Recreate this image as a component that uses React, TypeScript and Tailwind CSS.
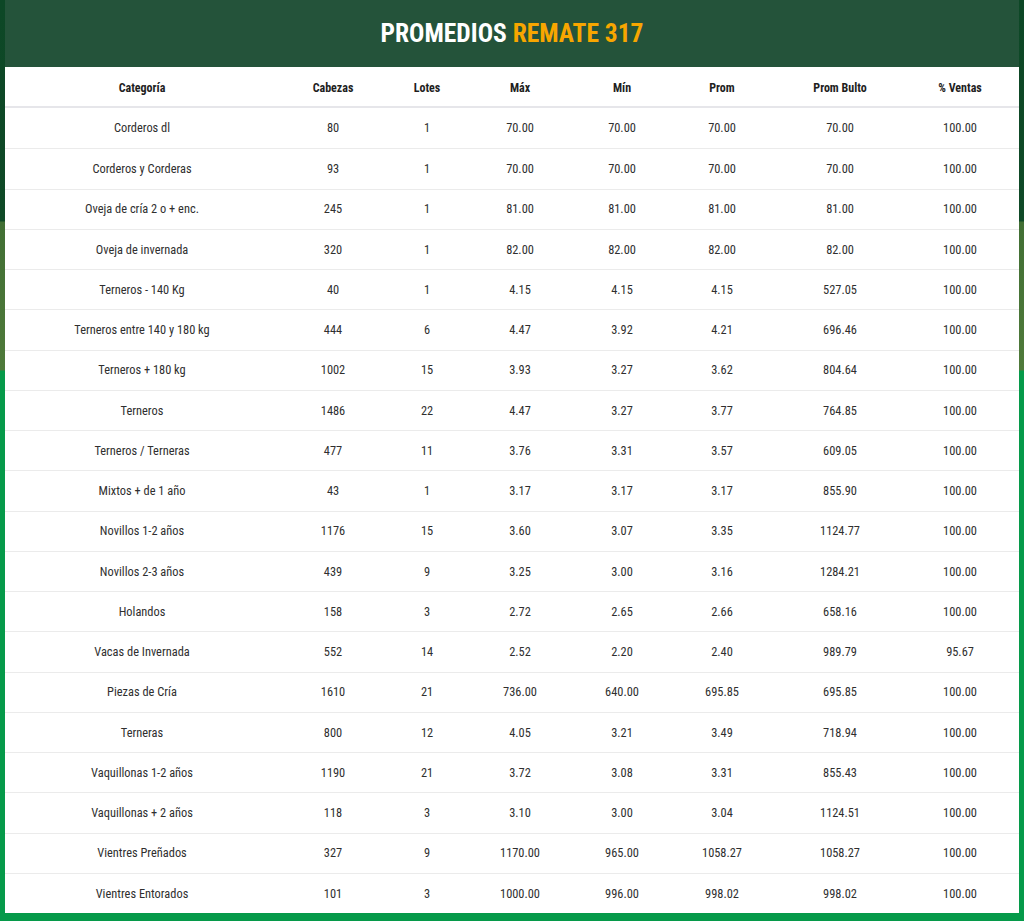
import React from "react";

const rows: string[][] = [
  ["Corderos dl", "80", "1", "70.00", "70.00", "70.00", "70.00", "100.00"],
  ["Corderos y Corderas", "93", "1", "70.00", "70.00", "70.00", "70.00", "100.00"],
  ["Oveja de cría 2 o + enc.", "245", "1", "81.00", "81.00", "81.00", "81.00", "100.00"],
  ["Oveja de invernada", "320", "1", "82.00", "82.00", "82.00", "82.00", "100.00"],
  ["Terneros - 140 Kg", "40", "1", "4.15", "4.15", "4.15", "527.05", "100.00"],
  ["Terneros entre 140 y 180 kg", "444", "6", "4.47", "3.92", "4.21", "696.46", "100.00"],
  ["Terneros + 180 kg", "1002", "15", "3.93", "3.27", "3.62", "804.64", "100.00"],
  ["Terneros", "1486", "22", "4.47", "3.27", "3.77", "764.85", "100.00"],
  ["Terneros / Terneras", "477", "11", "3.76", "3.31", "3.57", "609.05", "100.00"],
  ["Mixtos + de 1 año", "43", "1", "3.17", "3.17", "3.17", "855.90", "100.00"],
  ["Novillos 1-2 años", "1176", "15", "3.60", "3.07", "3.35", "1124.77", "100.00"],
  ["Novillos 2-3 años", "439", "9", "3.25", "3.00", "3.16", "1284.21", "100.00"],
  ["Holandos", "158", "3", "2.72", "2.65", "2.66", "658.16", "100.00"],
  ["Vacas de Invernada", "552", "14", "2.52", "2.20", "2.40", "989.79", "95.67"],
  ["Piezas de Cría", "1610", "21", "736.00", "640.00", "695.85", "695.85", "100.00"],
  ["Terneras", "800", "12", "4.05", "3.21", "3.49", "718.94", "100.00"],
  ["Vaquillonas 1-2 años", "1190", "21", "3.72", "3.08", "3.31", "855.43", "100.00"],
  ["Vaquillonas + 2 años", "118", "3", "3.10", "3.00", "3.04", "1124.51", "100.00"],
  ["Vientres Preñados", "327", "9", "1170.00", "965.00", "1058.27", "1058.27", "100.00"],
  ["Vientres Entorados", "101", "3", "1000.00", "996.00", "998.02", "998.02", "100.00"],
];

const headers = ["Categoría", "Cabezas", "Lotes", "Máx", "Mín", "Prom", "Prom Bulto", "% Ventas"];

const grid = "grid grid-cols-[274px_108px_80px_106px_98px_102px_134px_106px]";

export default function App() {
  return (
    <div
      className="w-[1024px] h-[921px] overflow-hidden px-[5px] bg-[linear-gradient(to_bottom,#0d4726_0px,#0f4a27_221px,#416f34_222px,#4f7a3a_370px,#069a4a_371px,#069a4a_921px)]"
      style={{ fontFamily: '"Roboto Condensed", "Liberation Sans Narrow", "DejaVu Sans Condensed", Roboto, sans-serif' }}
    >
      <div className="h-[67px] bg-[#24533a] flex items-center justify-center pt-[1px]">
        <h1 className="text-[25.5px] font-bold leading-none">
          <span className="text-white">PROMEDIOS </span>
          <span className="text-[#f7a600]">REMATE 317</span>
        </h1>
      </div>
      <div className="bg-white">
        <div className={`${grid} h-[41px] items-center pt-[2px] border-b-2 border-[#e6e6ea] text-[12px] font-bold text-[#1e1e1e]`}>
          {headers.map((h) => (
            <div key={h} className="text-center">{h}</div>
          ))}
        </div>
        {rows.map((r, i) => (
          <div
            key={i}
            className={`${grid} h-[40.25px] items-center pt-[1px] text-[12.4px] text-[#2f2f2f] ${i > 0 ? "border-t border-[#ebebeb]" : ""}`}
          >
            {r.map((c, j) => (
              <div key={j} className="text-center">{c}</div>
            ))}
          </div>
        ))}
      </div>
    </div>
  );
}
